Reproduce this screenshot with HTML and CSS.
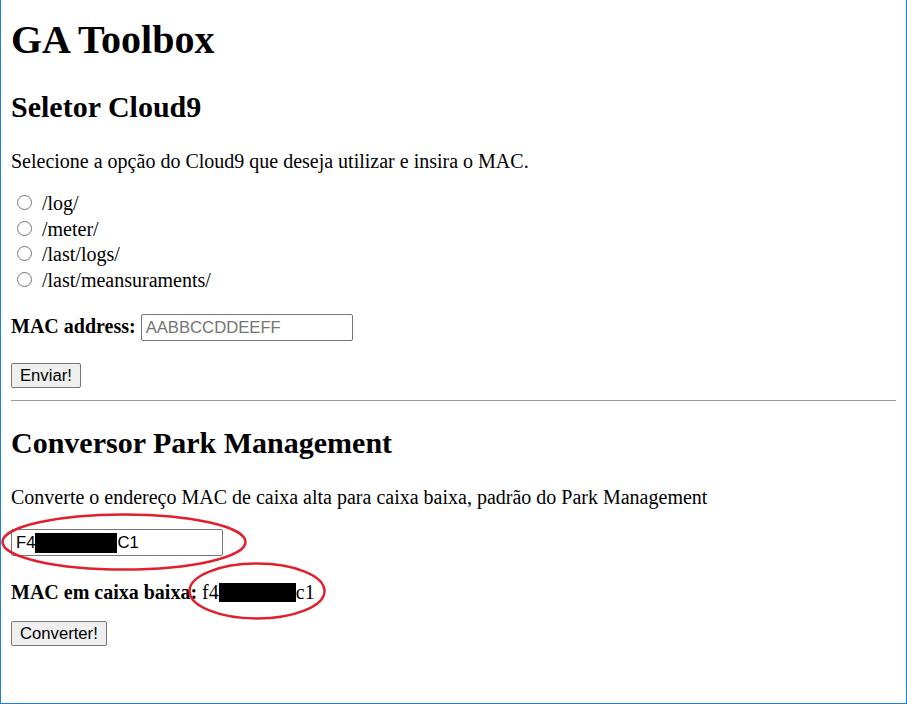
FILE: index.html
```html
<!DOCTYPE html>
<html lang="pt">
<head>
<meta charset="utf-8">
<title>GA Toolbox</title>
<link rel="stylesheet" href="styles.css">
</head>
<body>
<div class="window">
  <h1 class="title">GA Toolbox</h1>

  <h2 class="section-title">Seletor Cloud9</h2>
  <p class="text intro">Selecione a opção do Cloud9 que deseja utilizar e insira o MAC.</p>
  <div class="options">
    <label class="option"><input class="radio" type="radio" name="op"> /log/</label>
    <label class="option"><input class="radio" type="radio" name="op"> /meter/</label>
    <label class="option"><input class="radio" type="radio" name="op"> /last/logs/</label>
    <label class="option"><input class="radio" type="radio" name="op"> /last/meansuraments/</label>
  </div>
  <p class="text field-row"><b>MAC address:</b> <input class="textbox" type="text" placeholder="AABBCCDDEEFF"></p>
  <div class="btn-row btn-row-1"><button class="btn" type="button">Enviar!</button></div>

  <hr class="divider">

  <h2 class="section-title">Conversor Park Management</h2>
  <p class="text intro">Converte o endereço MAC de caixa alta para caixa baixa, padrão do Park Management</p>
  <div class="input-row">
    <div class="fake-input">F4<span class="redact redact-in"></span>C1</div>
    <svg class="ellipse ellipse-1" viewBox="0 0 246 58" width="246" height="58"><ellipse cx="123" cy="29" rx="121.5" ry="27.5" fill="none" stroke="#e0202c" stroke-width="2.5"/></svg>
  </div>
  <p class="text result-row"><b>MAC em caixa baixa:</b> f4<span class="redact redact-out"></span>c1
    <svg class="ellipse ellipse-2" viewBox="0 0 138 58" width="138" height="58"><ellipse cx="69" cy="29" rx="67.5" ry="27.5" fill="none" stroke="#e0202c" stroke-width="2.5"/></svg>
  </p>
  <div class="btn-row"><button class="btn" type="button">Converter!</button></div>
</div>
</body>
</html>
```
FILE: styles.css
```css
html, body {
  margin: 0;
  padding: 0;
  background: #ffffff;
}

.window {
  box-sizing: border-box;
  width: 907px;
  height: 704px;
  border-left: 1px solid #1a82d8;
  border-right: 1px solid #1a82d8;
  border-bottom: 1px solid #1a82d8;
  padding: 1px 10px 0 10px;
  font-family: "Liberation Serif", "Times New Roman", serif;
  color: #000;
  overflow: hidden;
}

.title {
  font-size: 40px;
  line-height: 46px;
  font-weight: bold;
  margin: 16px 0 26px 0;
}

.section-title {
  font-size: 30px;
  line-height: 35px;
  font-weight: bold;
  margin: 24px 0 23px 0;
}

.text {
  font-size: 20px;
  line-height: 23px;
  margin: 20px 0;
}

.intro {
  margin: 26px 0 18px 0;
}

.options {
  font-size: 20px;
  line-height: 25.6px;
}

.option {
  display: block;
}

.radio {
  appearance: none;
  -webkit-appearance: none;
  box-sizing: border-box;
  width: 15px;
  height: 15px;
  margin: 4px 5px 0 6px;
  border: 1.5px solid #767676;
  border-radius: 50%;
  background: #fff;
  vertical-align: baseline;
}

.field-row {
  margin-top: 21px;
}

.textbox {
  box-sizing: border-box;
  width: 212px;
  height: 27px;
  padding: 0 4px;
  border: 1px solid #767676;
  border-radius: 2px;
  font-family: "Liberation Sans", Arial, sans-serif;
  font-size: 16.67px;
  color: #000;
  vertical-align: baseline;
}

.textbox::placeholder {
  color: #757575;
}

.btn-row {
  margin: 0;
}

.btn-row-1 {
  padding-top: 2px;
}

.btn {
  box-sizing: border-box;
  height: 25px;
  padding: 0 8px;
  border: 1px solid #767676;
  border-radius: 2px;
  background: #efefef;
  font-family: "Liberation Sans", Arial, sans-serif;
  font-size: 16.67px;
  color: #000;
}

.divider {
  border: 0;
  border-top: 1px solid #9a9a9a;
  margin: 12px 0 0 0;
  height: 0;
}

.input-row {
  position: relative;
  margin: 0 0 25px 0;
  padding-top: 2px;
}

.fake-input {
  box-sizing: border-box;
  width: 212px;
  height: 27px;
  padding: 0 4px;
  border: 1px solid #767676;
  border-radius: 2px;
  font-family: "Liberation Sans", Arial, sans-serif;
  font-size: 16.67px;
  line-height: 25px;
  color: #000;
  display: flex;
  align-items: center;
}

.redact {
  display: inline-block;
  background: #000;
}

.redact-in {
  width: 82px;
  height: 20px;
}

.redact-out {
  width: 77px;
  height: 19px;
  vertical-align: -3px;
}

.result-row {
  position: relative;
  margin: 0 0 17px 0;
}

.ellipse {
  position: absolute;
  pointer-events: none;
}

.ellipse-1 {
  left: -10px;
  top: -14px;
}

.ellipse-2 {
  left: 177px;
  top: -19px;
}
```
